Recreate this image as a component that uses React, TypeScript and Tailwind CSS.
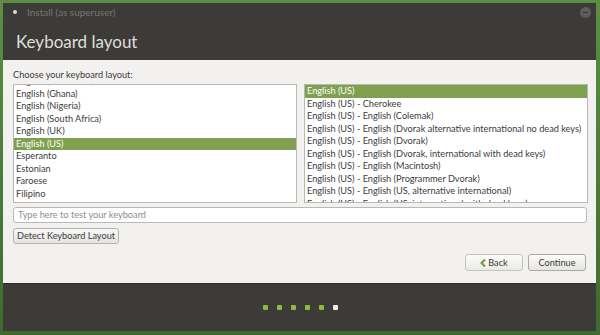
import React from "react";

const leftLayouts = [
  "English (Cameroon)",
  "English (Ghana)",
  "English (Nigeria)",
  "English (South Africa)",
  "English (UK)",
  "English (US)",
  "Esperanto",
  "Estonian",
  "Faroese",
  "Filipino",
  "Finnish",
];

const rightVariants = [
  "English (US)",
  "English (US) - Cherokee",
  "English (US) - English (Colemak)",
  "English (US) - English (Dvorak alternative international no dead keys)",
  "English (US) - English (Dvorak)",
  "English (US) - English (Dvorak, international with dead keys)",
  "English (US) - English (Macintosh)",
  "English (US) - English (Programmer Dvorak)",
  "English (US) - English (US, alternative international)",
  "English (US) - English (US, international with dead keys)",
];

const font = { fontFamily: '"Lato", "Noto Sans", sans-serif' };

const ListBox = ({
  items,
  selected,
  offset,
}: {
  items: string[];
  selected: string;
  offset: string;
}) => (
  <div className="h-[119px] overflow-hidden border border-[#b9b8b3] bg-white">
    <div className={offset}>
      {items.map((item) => (
        <div
          key={item}
          className={
            item === selected
              ? "h-[12.5px] leading-[12.5px] px-[2px] bg-[#7fa04e] text-white whitespace-nowrap"
              : "h-[12.5px] leading-[12.5px] px-[2px] text-[#3c3c3c] whitespace-nowrap"
          }
        >
          {item}
        </div>
      ))}
    </div>
  </div>
);

const App = () => {
  return (
    <div
      className="w-[600px] h-[335px] bg-gradient-to-b from-[#5c8f45] to-[#3f6a2e] pt-[3px] pl-[3px] pr-[4px] pb-[4px]"
      style={font}
    >
      <div className="w-full h-full flex flex-col bg-[#3c3b37]">
        {/* title bar + header */}
        <div className="h-[57px] relative">
          <div className="flex items-center h-[17px] pl-[10px] pt-[1px]">
            <span className="w-[4px] h-[4px] rounded-full bg-[#d8d8d4]" />
            <span className="ml-[10px] text-[10px] text-[#77766f]">
              Install (as superuser)
            </span>
          </div>
          <div className="absolute right-[5px] top-[4px] w-[11px] h-[11px] rounded-full bg-[#5e5d57] flex items-center justify-center">
            <span className="w-[5px] h-[1px] bg-[#3c3b37]" />
          </div>
          <div className="pl-[13px] pt-[12px] text-[17px] leading-[20px] text-[#dfdfdb]">
            Keyboard layout
          </div>
        </div>

        {/* content */}
        <div className="h-[223px] bg-[#f2f1f0] pl-[10px] pr-[8px] pt-[9px] text-[9.2px]">
          <div className="h-[15px] leading-[12px] text-[#3c3c3c]">
            Choose your keyboard layout:
          </div>
          <div className="grid grid-cols-2 gap-[7px]">
            <ListBox items={leftLayouts} selected="English (US)" offset="-mt-[10px]" />
            <ListBox items={rightVariants} selected="English (US)" offset="mt-0" />
          </div>
          <div className="mt-[4px] mr-[1px] h-[16px] rounded-[3px] border border-[#b9b8b3] bg-white px-[4px] leading-[14px] text-[#8e8e8a]">
            Type here to test your keyboard
          </div>
          <button className="mt-[5px] h-[16px] px-[3px] rounded-[3px] border border-[#b3b2ad] bg-gradient-to-b from-[#f8f8f7] to-[#e4e3e0] leading-[14px] text-[#3c3c3c]">
            Detect Keyboard Layout
          </button>
          <div className="mt-[10px] flex justify-end gap-[5px] pr-[2px]">
            <button className="w-[58px] h-[17px] rounded-[3px] border border-[#c4c3be] bg-gradient-to-b from-[#fbfbfa] to-[#ebeae7] flex items-center justify-center gap-[2px] text-[#3c3c3c]">
              <svg width="6" height="8" viewBox="0 0 6 8">
                <path d="M5 0.5 L1.5 4 L5 7.5" fill="none" stroke="#6f9a3a" strokeWidth="2" />
              </svg>
              <span>Back</span>
            </button>
            <button className="w-[58px] h-[17px] rounded-[3px] border border-[#a9a8a3] bg-gradient-to-b from-[#fbfbfa] to-[#e6e5e2] text-[#3c3c3c]">
              Continue
            </button>
          </div>
        </div>

        {/* footer */}
        <div className="flex-1 flex items-center justify-center gap-[9px] border-t border-[#2e2d2a] pl-[2px]">
          {[0, 1, 2, 3, 4].map((i) => (
            <span key={i} className="w-[5px] h-[5px] rounded-[1px] bg-[#8cbb3d]" />
          ))}
          <span className="w-[5px] h-[5px] rounded-[1px] bg-[#ececec]" />
        </div>
      </div>
    </div>
  );
};

export default App;
